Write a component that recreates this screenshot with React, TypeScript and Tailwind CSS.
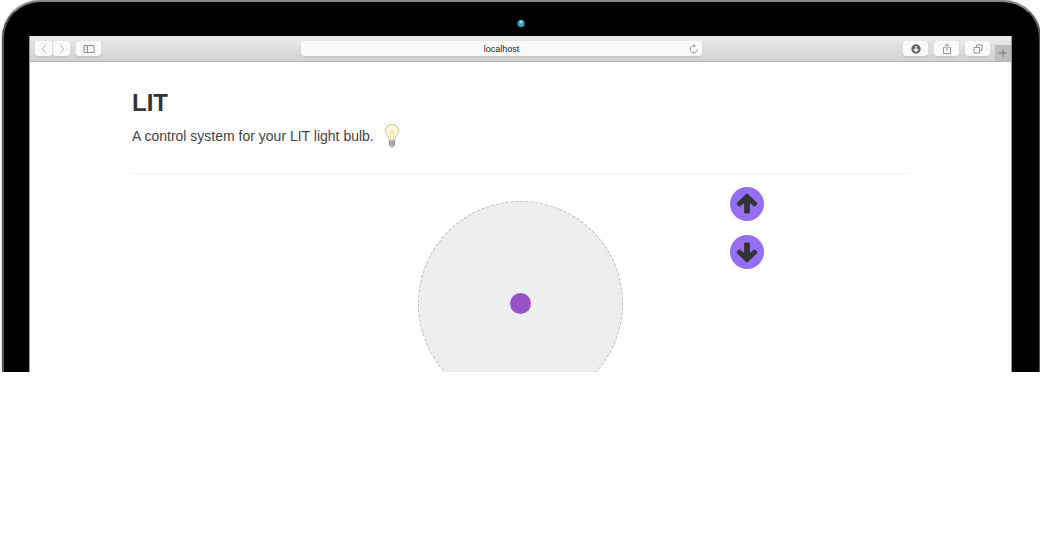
import React from "react";

const toolButton =
  "flex h-[15px] items-center justify-center rounded-[3px] bg-[#fafafa] shadow-[0_1px_1px_#c4c4c4]";

function Chevron({ d }: { d: string }) {
  return (
    <svg viewBox="0 0 6 10" className="h-[10px] w-[6px]" fill="none" stroke="#b4b4b4" aria-hidden="true">
      <path d={d} />
    </svg>
  );
}

function BrowserBar() {
  return (
    <header className="flex h-[26px] items-center border-b border-[#b5b5b5] bg-linear-to-b from-[#ebebeb] to-[#d1d1d1] pl-[5px]">
      <div className="flex flex-[266] items-center">
        <div className="flex gap-px">
          <button aria-label="Back" className={`${toolButton} w-[17px]`}>
            <Chevron d="M5 1 1 5l4 4" />
          </button>
          <button aria-label="Forward" className={`${toolButton} w-[17px]`}>
            <Chevron d="m1 1 4 4-4 4" />
          </button>
        </div>
        <button aria-label="Sidebar" className={`${toolButton} ml-1.5 w-[25px]`}>
          <svg viewBox="0 0 12 10" className="h-[10px] w-3" fill="none" stroke="#8b8b8b" aria-hidden="true">
            <path d="M1 1.500h10v7H1zM4.500 1.500v7" />
            <path d="M2 3.500h1.500M2 5.500h1.500" strokeWidth=".5" />
          </svg>
        </button>
      </div>
      <div className="flex h-[15px] w-[41%] items-center rounded-[3px] bg-[#fafafa] pr-[3px] shadow-[0_1px_1px_#c4c4c4]">
        <input
          aria-label="Address"
          defaultValue="localhost"
          className="h-[15px] min-w-0 flex-1 bg-transparent pl-[13px] text-center text-[9px] leading-none text-[#222] outline-none"
        />
        <button aria-label="Reload" className="flex">
          <svg viewBox="0 0 10 10" className="size-[10px]" fill="none" stroke="#777" strokeWidth=".8" aria-hidden="true">
            <path d="M5.500 1.700A3.600 3.600 0 1 0 8.500 5.200" />
            <path d="M4.600.3 6.400 1.800 4.700 3.300" />
          </svg>
        </button>
      </div>
      <div className="flex flex-[309] items-center justify-end gap-[5px]">
        <div className="flex gap-1.5">
          <button aria-label="Downloads" className={`${toolButton} w-[25px]`}>
            <svg viewBox="0 0 10 10" className="size-[10px]" aria-hidden="true">
              <circle cx="5" cy="5" r="4.700" fill="#666" />
              <path d="M5 2v5M2.900 5 5 7.300 7.100 5" fill="none" stroke="#fff" strokeWidth="1.200" />
            </svg>
          </button>
          <button aria-label="Share" className={`${toolButton} w-[25px]`}>
            <svg viewBox="0 0 10 12" className="h-3 w-[10px]" fill="none" stroke="#8b8b8b" strokeWidth=".9" aria-hidden="true">
              <path d="M3.500 4.500h-2v6h7v-6h-2M5 8V1M2.900 3 5 .8 7.100 3" />
            </svg>
          </button>
          <button aria-label="Tabs" className={`${toolButton} w-[25px]`}>
            <svg viewBox="0 0 10 10" className="size-[10px]" fill="none" stroke="#8b8b8b" strokeWidth=".9" aria-hidden="true">
              <path d="M1 3.500h5.500V9H1zM3.500 3.500V1H9v5.500H6.500" />
            </svg>
          </button>
        </div>
        <button
          aria-label="New tab"
          className="mt-[9px] flex h-4 w-4 items-center justify-center self-end bg-[#bdbdbd]"
        >
          <svg viewBox="0 0 8 8" className="size-2" stroke="#777" aria-hidden="true">
            <path d="M4 0v8M0 4h8" />
          </svg>
        </button>
      </div>
    </header>
  );
}

function LightBulb() {
  return (
    <svg viewBox="0 0 16 26" className="h-[26px] w-4" role="img" aria-label="Light bulb">
      <defs>
        <radialGradient id="glow" cx=".5" cy=".5" r=".55">
          <stop offset="0" stopColor="#fff0ae" />
          <stop offset=".6" stopColor="#fffdf3" />
          <stop offset="1" stopColor="#f5e4c2" />
        </radialGradient>
        <linearGradient id="metal">
          <stop offset="0" stopColor="#777" />
          <stop offset=".45" stopColor="#ddd" />
          <stop offset="1" stopColor="#777" />
        </linearGradient>
      </defs>
      <path
        d="M8 1.500c-4 0-6.700 2.800-6.700 6.300 0 3.800 3.400 5.300 3.900 9.300h5.600c.5-4 3.900-5.500 3.900-9.300C14.700 4.300 12 1.500 8 1.500Z"
        fill="url(#glow)"
        stroke="#d4bd92"
        strokeWidth=".9"
      />
      <path d="M7 17 5.800 8l1.400 1.800L8 8l.8 1.800L10.200 8 9 17" fill="none" stroke="#f3dc94" strokeWidth=".7" />
      <path d="M5.200 17.300h5.600v4.500L9.500 24h-3l-1.300-2.200Z" fill="url(#metal)" />
      <path d="M5.200 19.200h5.600M5.200 21.200h5.600M6.500 23.700h3" stroke="#777" strokeWidth=".6" />
    </svg>
  );
}

function Arrow({ down = false }: { down?: boolean }) {
  return (
    <svg viewBox="0 0 34 34" className={down ? "size-full rotate-180" : "size-full"} aria-hidden="true">
      <path
        d="M17 7.900 26 16.700 24.600 18.200 18.600 13.300V25.300H15.400V13.300L9.400 18.200 8 16.700Z"
        fill="currentColor"
        stroke="currentColor"
        strokeWidth="2.600"
        strokeLinejoin="round"
      />
    </svg>
  );
}

export default function App() {
  const round = "size-[34px] rounded-full bg-[#956ef5] text-[#333]";
  return (
    <div className="min-h-screen bg-white font-['Liberation_Sans',Arial,sans-serif]">
      <div className="h-[372px] overflow-hidden">
        <div className="-mr-px ml-0.5 rounded-t-[38px] border-x-2 border-t-2 border-x-[#555] border-t-[#85888a] bg-black pr-[27px] pl-[25px] shadow-[0_0_2px_#999]">
          <div className="flex h-[34px] items-center justify-center pt-[9px]">
            <svg viewBox="0 0 10 10" className="size-[10px]" aria-hidden="true">
              <circle cx="5" cy="5" r="4.700" fill="#111" />
              <circle cx="5" cy="4.600" r="3.500" fill="#36a4bf" />
              <circle cx="5" cy="3" r="1.400" fill="#9be3ee" />
            </svg>
          </div>
          <div className="border-x border-[#999] bg-white">
            <BrowserBar />
            <main className="px-[102px] pt-[25px]">
              <h1 className="text-2xl leading-8 font-bold text-[#333]">LIT</h1>
              <div className="flex h-[34px] items-center gap-2.5 text-sm leading-5 text-[#444]">
                <p>A control system for your LIT light bulb.</p>
                <LightBulb />
              </div>
              <hr className="mt-5 border-[#f3f3f3]" />
              <div className="grid grid-cols-[1fr_205px_1fr]">
                <div />
                <div className="mt-[27px] flex size-[205px] items-center justify-center rounded-full border border-dashed border-[#bbb] bg-[#eee]">
                  <button aria-label="Direction" className="size-[21px] rounded-full bg-[#9853c7]" />
                </div>
                <div className="flex flex-col items-start gap-3.5 pt-[13px] pl-[107px]">
                  <button aria-label="Up" className={round}>
                    <Arrow />
                  </button>
                  <button aria-label="Down" className={round}>
                    <Arrow down />
                  </button>
                </div>
              </div>
            </main>
          </div>
        </div>
      </div>
    </div>
  );
}
